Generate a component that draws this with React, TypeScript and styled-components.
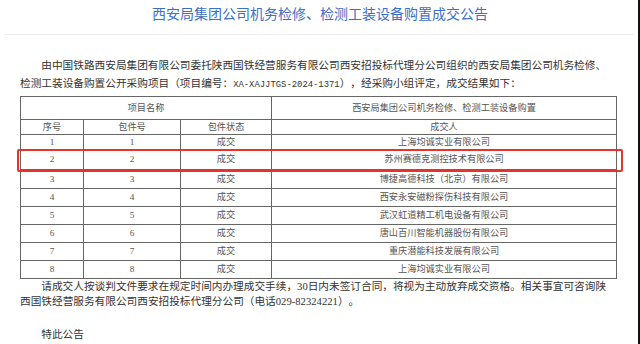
import styled, { createGlobalStyle } from 'styled-components'

const GlobalStyle = createGlobalStyle`
  html, body {
    margin: 0;
    padding: 0;
    background: #ffffff;
  }
  body {
    font-family: "Liberation Serif", "Noto Sans CJK SC", serif;
    text-spacing-trim: space-all;
  }
`

const Page = styled.div`
  box-sizing: border-box;
  width: 640px;
  height: 344px;
  overflow: hidden;
  border-right: 2px solid #111111;
  background: #ffffff;
`
const Header = styled.div`
  height: 34px;
  margin: 0 4px;
  border-bottom: 1px solid #eeeeee;
`
const Title = styled.h1`
  margin: 0;
  padding-left: 2px;
  font-family: "Noto Sans CJK SC", sans-serif;
  font-size: 14px;
  font-weight: normal;
  line-height: 26px;
  color: #3b6fc8;
  text-align: center;
`
const Content = styled.div`
  width: 597px;
  padding: 0 0 0 20px;
  color: #333333;
`
const Paragraph = styled.p<{ $lh: number; $top?: number }>`
  width: 592px;
  margin: ${(p) => p.$top ?? 0}px 0 0 0;
  font-size: 10.67px;
  line-height: ${(p) => p.$lh}px;
  text-indent: 21.3px;
`
const Mono = styled.span`
  font-family: "Liberation Mono", monospace;
  font-size: 8.9px;
  line-height: 1;
`
const TableWrap = styled.div`
  position: relative;
  margin-top: 3px;
`
const Table = styled.table`
  width: 597px;
  table-layout: fixed;
  border-collapse: collapse;
  font-size: 9.2px;
  line-height: 12px;
  color: #555555;
`
const Row = styled.tr<{ $h: number }>`
  height: ${(p) => p.$h}px;
`
const Cell = styled.td`
  padding: 0;
  border: 1px solid #666666;
  text-align: center;
  vertical-align: middle;
`
const Highlight = styled.div`
  position: absolute;
  top: 53px;
  left: -3px;
  width: 602px;
  height: 19px;
  border: 2px solid #e8332c;
  border-radius: 2px;
  pointer-events: none;
`

const winners = [
  '上海均诚实业有限公司',
  '苏州赛德克测控技术有限公司',
  '博捷高德科技（北京）有限公司',
  '西安永安磁粉探伤科技有限公司',
  '武汉虹道精工机电设备有限公司',
  '唐山百川智能机器股份有限公司',
  '重庆潜能科技发展有限公司',
  '上海均诚实业有限公司',
]
const rowHeights = [15, 20, 19, 18, 18, 18, 18, 18]

const App = () => {
  return (
    <Page>
      <GlobalStyle />
      <Header>
        <Title>西安局集团公司机务检修、检测工装设备购置成交公告</Title>
      </Header>
      <Content>
        <Paragraph $lh={18.3} $top={21}>
          由中国铁路西安局集团有限公司委托陕西国铁经营服务有限公司西安招投标代理分公司组织的西安局集团公司机务检修、检测工装设备购置公开采购项目（项目编号：<Mono>XA-XAJJTGS-2024-1371</Mono>），经采购小组评定，成交结果如下：
        </Paragraph>
        <TableWrap>
          <Table>
            <colgroup>
              <col style={{ width: 63 }} />
              <col style={{ width: 97 }} />
              <col style={{ width: 91 }} />
              <col />
            </colgroup>
            <tbody>
              <Row $h={23}>
                <Cell colSpan={3}>项目名称</Cell>
                <Cell>西安局集团公司机务检修、检测工装设备购置</Cell>
              </Row>
              <Row $h={15}>
                <Cell>序号</Cell>
                <Cell>包件号</Cell>
                <Cell>包件状态</Cell>
                <Cell>成交人</Cell>
              </Row>
              {winners.map((name, i) => (
                <Row key={i} $h={rowHeights[i]}>
                  <Cell>{i + 1}</Cell>
                  <Cell>{i + 1}</Cell>
                  <Cell>成交</Cell>
                  <Cell>{name}</Cell>
                </Row>
              ))}
            </tbody>
          </Table>
          <Highlight />
        </TableWrap>
        <Paragraph $lh={15.5}>
          请成交人按谈判文件要求在规定时间内办理成交手续，30日内未签订合同，将视为主动放弃成交资格。相关事宜可咨询陕西国铁经营服务有限公司西安招投标代理分公司（电话029-82324221）。
        </Paragraph>
        <Paragraph $lh={15.5} $top={17}>
          特此公告
        </Paragraph>
      </Content>
    </Page>
  )
}

export default App
